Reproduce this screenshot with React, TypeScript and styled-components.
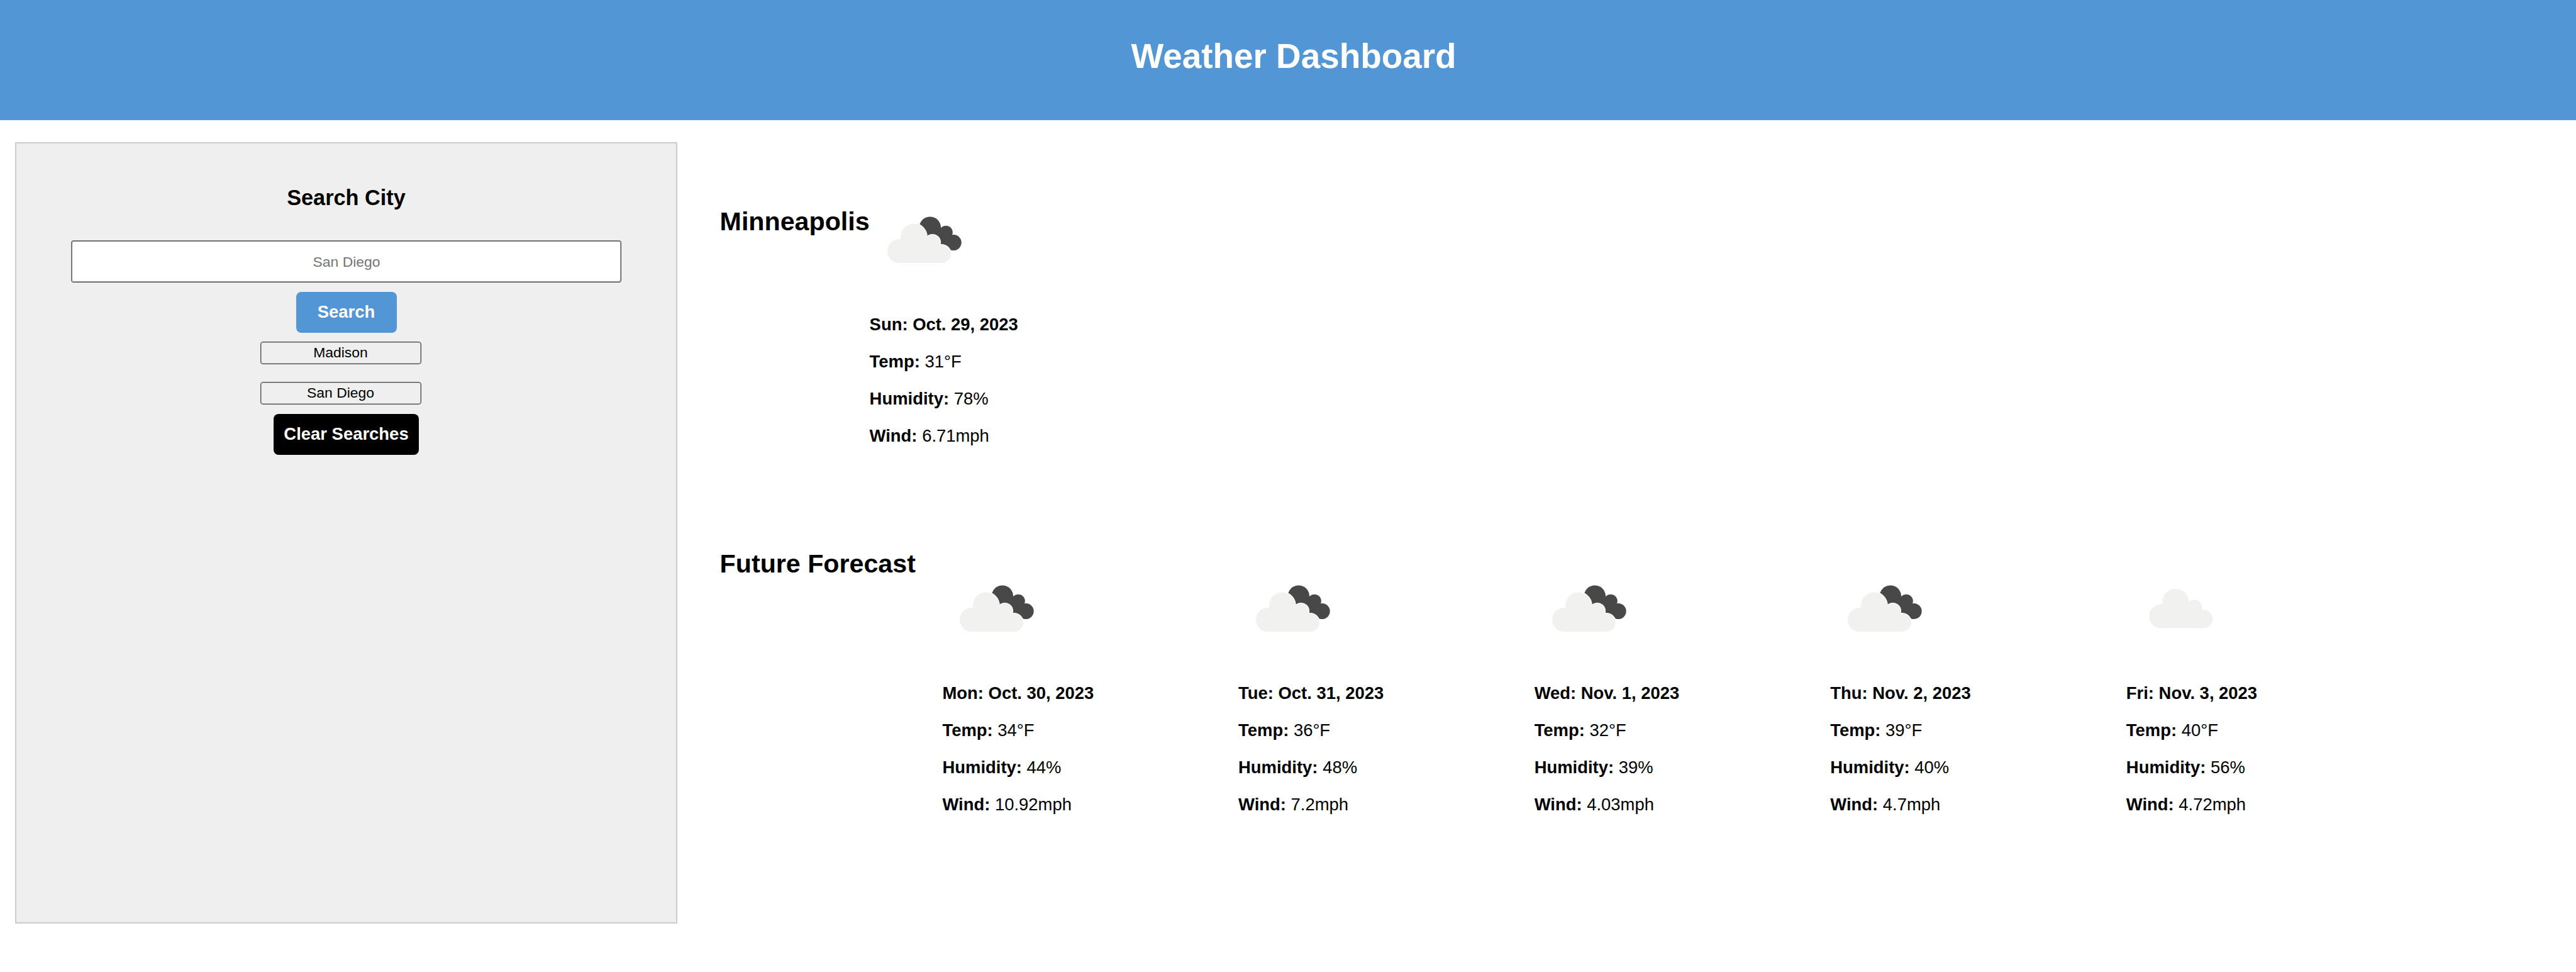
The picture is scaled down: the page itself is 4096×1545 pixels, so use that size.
import React from 'react';
import styled, { createGlobalStyle } from 'styled-components';

const GlobalStyle = createGlobalStyle`
  * { box-sizing: border-box; }
  body {
    margin: 0;
    background: #fff;
    color: #000;
    font-family: "Liberation Sans", Arial, Helvetica, sans-serif;
    overflow: hidden;
  }
  h1, h2, h3, p { margin: 0; }
`;

const Page = styled.div`
  width: 4096px;
  height: 1545px;
`;

const Header = styled.header`
  height: 191px;
  padding: 57px 0 0 18px;
  background: #5296d5;
  color: #fff;
  text-align: center;
`;

const Title = styled.h1`
  font-size: 54.85px;
  line-height: 64px;
`;

const Main = styled.main`
  display: flex;
  align-items: flex-start;
  padding: 35px 0 0 24px;
`;

const SearchPanel = styled.aside`
  display: flex;
  flex-direction: column;
  align-items: center;
  width: 1053px;
  height: 1242px;
  padding-top: 66px;
  background: #efefef;
  border: 2px solid #ccc;
`;

const PanelTitle = styled.h3`
  font-size: 34.3px;
  line-height: 40px;
`;

const CityInput = styled.input`
  width: 875px;
  height: 67px;
  margin-top: 48px;
  padding: 0;
  border-style: solid;
  border-width: 2px 1px 1px 2px;
  border-color: #707070 #484848 #383838 #767676;
  border-radius: 4px;
  background: #fff;
  box-shadow: inset -1px -1px 0 #aaa;
  font-family: inherit;
  font-size: 22.9px;
  text-align: center;
  outline: none;
  &::placeholder { color: #757575; opacity: 1; }
`;

const ActionButton = styled.button<{ $width: number; $color: string }>`
  width: ${(p) => p.$width}px;
  height: 65px;
  margin-top: 15px;
  padding: 0 0 1px;
  border: none;
  border-radius: 8px;
  background: ${(p) => p.$color};
  color: #fff;
  font-family: inherit;
  font-size: 27.45px;
  font-weight: 700;
  white-space: nowrap;
`;

const History = styled.div`
  display: flex;
  flex-direction: column;
  gap: 28px;
  margin: 14px 18px 0 0;
`;

const HistoryButton = styled.button`
  width: 256px;
  height: 36px;
  padding: 0 0 1px;
  border: 1px solid #484848;
  border-radius: 4px;
  background: #efefef;
  box-shadow: inset 0 0 0 1px rgba(0, 0, 0, 0.25);
  color: #000;
  font-family: inherit;
  font-size: 22.9px;
`;

const Results = styled.div`
  padding: 102px 0 0 67.6px;
`;

const Section = styled.section<{ $gap?: number }>`
  display: flex;
  align-items: flex-start;
  height: 544px;
  gap: ${(p) => p.$gap ?? 0}px;
`;

const SectionTitle = styled.h2`
  font-size: 41.2px;
  line-height: 48px;
  white-space: nowrap;
`;

const Days = styled.div<{ $offset?: number }>`
  display: flex;
  margin-top: ${(p) => p.$offset ?? 0}px;
`;

const Day = styled.article`
  width: 470.6px;
`;

const WeatherIcon = styled.svg`
  display: block;
  width: 172.2px;
  height: 104.3px;
  margin-bottom: 53.7px;
`;

const Line = styled.p`
  font-size: 27.43px;
  line-height: 59px;
  white-space: nowrap;
`;

type Sky = 'broken' | 'scattered';

interface DayData {
  date: string;
  temp: string;
  humidity: string;
  wind: string;
  sky: Sky;
}

const today: DayData = { date: 'Sun: Oct. 29, 2023', temp: '31°F', humidity: '78%', wind: '6.71mph', sky: 'broken' };

const forecast: DayData[] = [
  { date: 'Mon: Oct. 30, 2023', temp: '34°F', humidity: '44%', wind: '10.92mph', sky: 'broken' },
  { date: 'Tue: Oct. 31, 2023', temp: '36°F', humidity: '48%', wind: '7.2mph', sky: 'broken' },
  { date: 'Wed: Nov. 1, 2023', temp: '32°F', humidity: '39%', wind: '4.03mph', sky: 'broken' },
  { date: 'Thu: Nov. 2, 2023', temp: '39°F', humidity: '40%', wind: '4.7mph', sky: 'broken' },
  { date: 'Fri: Nov. 3, 2023', temp: '40°F', humidity: '56%', wind: '4.72mph', sky: 'scattered' },
];

const history = ['Madison', 'San Diego'];

function CloudShape() {
  return (
    <>
      <circle cx="37.3" cy="75" r="20" />
      <circle cx="61.7" cy="51" r="22" />
      <circle cx="93" cy="60.5" r="13.2" />
      <circle cx="108.4" cy="79.6" r="15.4" />
      <path d="M37.3 55 L61 50 L93 58 L108 70 V95 H37.3 Z" />
    </>
  );
}

function SkyIcon({ sky }: { sky: Sky }) {
  if (sky === 'scattered') {
    return (
      <WeatherIcon viewBox="0 0 181.6 110">
        <g transform="translate(21 -5.8)" fill="#f1f1ef">
          <CloudShape />
        </g>
      </WeatherIcon>
    );
  }
  return (
    <WeatherIcon viewBox="0 0 181.6 110">
      <g transform="translate(12.1 0)">
        <g fill="#484849">
          <circle cx="89" cy="35.6" r="18.2" />
          <circle cx="115.6" cy="43.6" r="11.3" />
          <circle cx="128.4" cy="60.7" r="13.2" />
          <path d="M89 36 L115.6 43.6 L128.4 60.7 L122 73 L100 70 L84 52 Z" />
        </g>
        <g fill="#fff" stroke="#fff" strokeWidth="2">
          <CloudShape />
        </g>
        <g fill="#f1f1ef">
          <CloudShape />
        </g>
      </g>
    </WeatherIcon>
  );
}

function DayCard({ day }: { day: DayData }) {
  return (
    <Day>
      <SkyIcon sky={day.sky} />
      <Line><b>{day.date}</b></Line>
      <Line><b>Temp:</b> {day.temp}</Line>
      <Line><b>Humidity:</b> {day.humidity}</Line>
      <Line><b>Wind:</b> {day.wind}</Line>
    </Day>
  );
}

export default function App() {
  return (
    <Page>
      <GlobalStyle />
      <Header>
        <Title>Weather Dashboard</Title>
      </Header>
      <Main>
        <SearchPanel>
          <PanelTitle>Search City</PanelTitle>
          <CityInput placeholder="San Diego" />
          <ActionButton $width={160} $color="#5296d5">Search</ActionButton>
          <History>
            {history.map((city) => (
              <HistoryButton key={city}>{city}</HistoryButton>
            ))}
          </History>
          <ActionButton $width={231} $color="#000">Clear Searches</ActionButton>
        </SearchPanel>
        <Results>
          <Section>
            <SectionTitle>Minneapolis</SectionTitle>
            <Days>
              <DayCard day={today} />
            </Days>
          </Section>
          <Section $gap={42.6}>
            <SectionTitle>Future Forecast</SectionTitle>
            <Days $offset={42}>
              {forecast.map((day) => (
                <DayCard key={day.date} day={day} />
              ))}
            </Days>
          </Section>
        </Results>
      </Main>
    </Page>
  );
}
